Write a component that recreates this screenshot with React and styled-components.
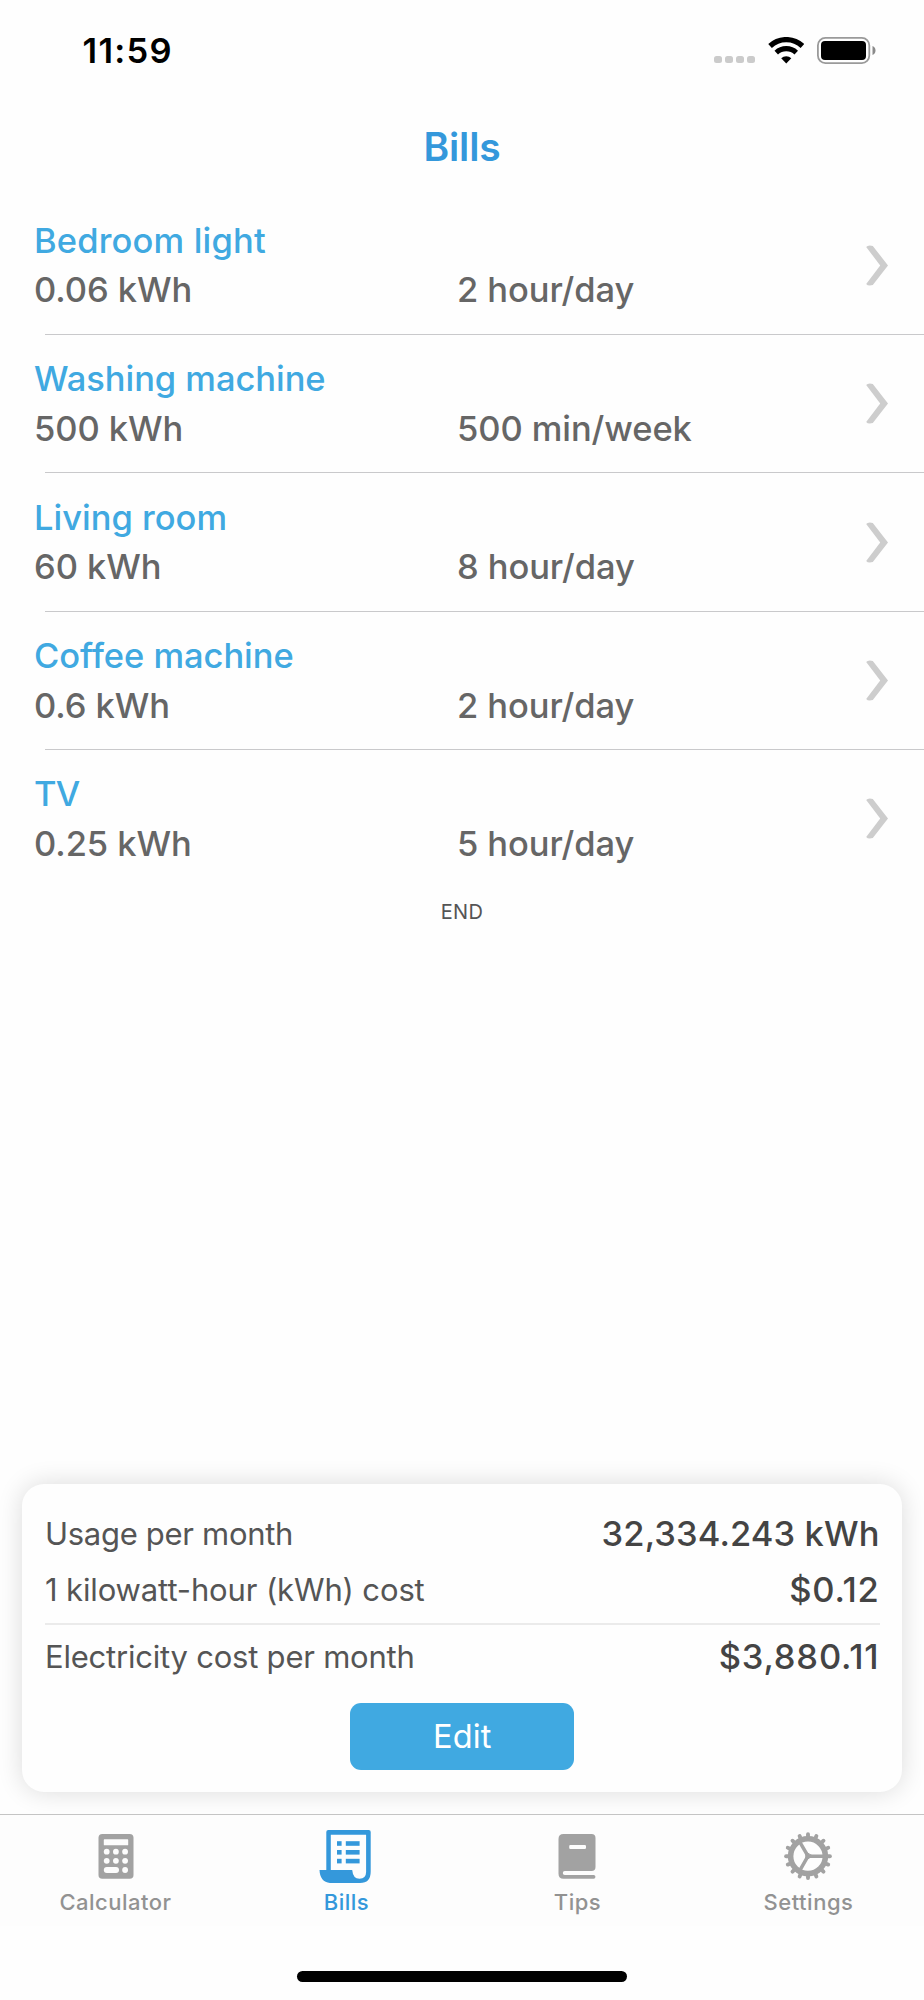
import styled, { createGlobalStyle } from "styled-components";

const GlobalStyle = createGlobalStyle`
  * {
    box-sizing: border-box;
  }
  body {
    margin: 0;
    background-color: #fefefe;
    font-family: Inter, "Liberation Sans", sans-serif;
  }
`;

const Container = styled.div`
  width: 924px;
  height: 2000px;
  display: flex;
  flex-direction: column;
  overflow: hidden;
`;

const StatusBar = styled.div`
  height: 98px;
  padding: 3px 48px 0 82.5px;
  display: flex;
  align-items: center;
  justify-content: space-between;
`;

const Time = styled.span`
  font-size: 34.5px;
  font-weight: 600;
  letter-spacing: 1.3px;
  color: #000;
`;

const StatusIcons = styled.div`
  display: flex;
  align-items: flex-end;
  height: 27px;
`;

const Signal = styled.div`
  display: flex;
  gap: 3.2px;
  margin: 0 12.2px 1px 0;
`;

const Dot = styled.span`
  width: 8px;
  height: 7.5px;
  border-radius: 2.5px;
  background-color: #cbcbcb;
`;

const Battery = styled.svg`
  margin-left: 13px;
`;

const Header = styled.header`
  height: 98.7px;
  padding-bottom: 2px;
  display: flex;
  align-items: center;
  justify-content: center;
`;

const Title = styled.h1`
  margin: 0;
  font-size: 39px;
  font-weight: 600;
  letter-spacing: -0.2px;
  color: #3498db;
`;

const List = styled.div`
  display: flex;
  flex-direction: column;
`;

const Row = styled.div`
  height: 137.4px;
  padding: 0 36px 0 34px;
  display: flex;
  align-items: center;
  justify-content: space-between;
`;

const Info = styled.div`
  display: grid;
  grid-template-columns: 423px auto;
  line-height: 49.6px;
  font-size: 34.5px;
  font-weight: 500;
`;

const Name = styled.span`
  grid-column: 1 / -1;
  color: #40a9e1;
  letter-spacing: ${(props) => props.$spacing}px;
`;

const Value = styled.span`
  color: #666;
  letter-spacing: -0.08px;
`;

const Divider = styled.div`
  height: 1px;
  margin-left: 45px;
  background-color: #c9c9cb;
`;

const End = styled.div`
  height: 48px;
  line-height: 48px;
  text-align: center;
  font-size: 20px;
  letter-spacing: 0.3px;
  color: #555;
`;

const Card = styled.section`
  height: 308px;
  margin: auto 22.5px 22px 22px;
  padding: 21px 22px 0 23px;
  border-radius: 22px;
  background-color: #fefefe;
  box-shadow: 0 0 26px rgba(0, 0, 0, 0.14);
  display: flex;
  flex-direction: column;
`;

const SummaryItem = styled.div`
  height: 56px;
  display: flex;
  align-items: center;
  justify-content: space-between;
`;

const SummaryLabel = styled.span`
  font-size: 31px;
  letter-spacing: ${(props) => props.$spacing}px;
  color: #555;
`;

const SummaryValue = styled.span`
  font-size: 34.5px;
  font-weight: 500;
  letter-spacing: ${(props) => props.$spacing}px;
  color: #444;
`;

const Hr = styled.hr`
  width: 100%;
  height: 2px;
  margin: 6px 0 3px;
  border: none;
  background-color: #ebebeb;
`;

const Button = styled.button`
  width: 224px;
  height: 67px;
  margin: 19px auto 0;
  padding: 0;
  border: none;
  border-radius: 11px;
  background-color: #40a9e1;
  color: #fff;
  font-family: inherit;
  font-size: 32.5px;
  letter-spacing: 0.1px;
`;

const TabBar = styled.nav`
  height: 112px;
  border-top: 1px solid #c4c4c4;
  background-color: #fdfdfd;
  display: grid;
  grid-template-columns: repeat(4, 1fr);
`;

const Tab = styled.a`
  padding-top: 13px;
  display: flex;
  flex-direction: column;
  align-items: center;
  font-size: 22px;
  font-weight: 500;
  line-height: 26px;
  color: ${(props) => (props.$active ? "#3498db" : "#929292")};
  svg {
    margin: 0 2px 5px 0;
    color: ${(props) => (props.$active ? "#3498db" : "#a2a2a2")};
  }
`;

const TabLabel = styled.span`
  letter-spacing: 0.5px;
`;

const HomeArea = styled.div`
  height: 74px;
  padding-top: 45px;
`;

const HomeIndicator = styled.div`
  width: 330px;
  height: 11px;
  margin: 0 auto;
  border-radius: 6px;
  background-color: #000;
`;

const WifiIcon = () => (
  <svg width="36.5" height="27" viewBox="0 0 36.5 27">
    <g fill="none" stroke="#000">
      <path d="M2.05 9A23.7 23.7 0 0 1 34.45 9" strokeWidth="5.3" />
      <path d="M8.25 15.55A14.7 14.7 0 0 1 28.25 15.55" strokeWidth="5.1" />
    </g>
    <path d="M18.25 26.6L13.2 21.2A7.4 7.4 0 0 1 23.3 21.2Z" />
  </svg>
);

const BatteryIcon = () => (
  <Battery width="59" height="27" viewBox="0 0 59 27">
    <rect
      x="0.9"
      y="0.9"
      width="51.4"
      height="25.2"
      rx="7.5"
      fill="none"
      stroke="#9a9a9a"
      strokeWidth="1.8"
    />
    <rect x="4" y="4" width="45" height="19" rx="4" />
    <path d="M55.5 9C59.5 10.5 59.5 16.5 55.5 18Z" fill="#8a8a8a" />
  </Battery>
);

const Chevron = () => (
  <svg width="22" height="41" viewBox="0 0 22 41">
    <path
      d="M0.2 2Q2 -0.4 6.8 0.9L22 20.5L6.8 40.1Q2 41.4 0.2 39L14.2 20.5Z"
      fill="#cdcdcd"
    />
  </svg>
);

const CalculatorIcon = () => (
  <svg width="56" height="56" viewBox="0 0 56 56">
    <rect x="11.5" y="6" width="35" height="44.7" rx="3.8" fill="currentColor" />
    <g fill="#fdfdfd">
      <rect x="16.8" y="11.3" width="24.4" height="6" rx="0.6" />
      {[23.7, 32.8].map((y) =>
        [19.7, 28.9, 38.1].map((x) => <circle key={x} cx={x} cy={y} r="2.9" />)
      )}
      <rect x="16.8" y="39" width="15.2" height="6" rx="3" />
      <circle cx="38.1" cy="42" r="2.9" />
    </g>
  </svg>
);

const BillsIcon = () => (
  <svg width="56" height="56" viewBox="0 0 56 56" fill="currentColor">
    <path
      fillRule="evenodd"
      d="M8.3 42V4Q8.3 2 10.3 2H50.7Q52.7 2 52.7 4V43.5Q52.7 55 42 55H12Q2 54 1.5 42ZM12.8 6.8V42H34.2Q35 50.8 41.5 50.8Q48.1 50.5 48.1 44V6.8Z"
    />
    {[13.2, 22, 30.8].map((y) => (
      <g key={y}>
        <rect x="19" y={y} width="4.6" height="4.6" />
        <rect x="27.8" y={y} width="13.8" height="4.6" />
      </g>
    ))}
  </svg>
);

const TipsIcon = () => (
  <svg width="56" height="56" viewBox="0 0 56 56">
    <path
      fill="currentColor"
      d="M14.5 6H42.5Q46.5 6 46.5 10V39Q46.5 43 42.5 43H15.8A2 2 0 0 0 15.8 47H44.6A1.8 1.8 0 0 1 44.6 50.7H14.5Q9.5 50.7 9.5 45.7V11Q9.5 6 14.5 6Z"
    />
    <rect x="20.2" y="16.9" width="16.8" height="4" rx="1.2" fill="#fdfdfd" />
  </svg>
);

const TEETH = Array.from({ length: 16 }, (_, i) => i * 22.5);
const SPOKES = [0, 120, 240];

const SettingsIcon = () => (
  <svg width="56" height="56" viewBox="0 0 56 56">
    <g
      transform="translate(28 28.2)"
      fill="none"
      stroke="currentColor"
      strokeLinecap="round"
    >
      <circle r="17.4" strokeWidth="5.6" />
      {TEETH.map((a) => (
        <path key={a} d="M19 0H21.9" strokeWidth="3.9" transform={`rotate(${a})`} />
      ))}
      {SPOKES.map((a) => (
        <path key={a} d="M0 0H16" strokeWidth="3.5" transform={`rotate(${a})`} />
      ))}
      <path
        d="M4.4 0L-2.2 3.8V-3.8Z"
        fill="currentColor"
        strokeWidth="1"
        strokeLinejoin="round"
      />
    </g>
  </svg>
);

const bills = [
  { name: "Bedroom light", power: "0.06 kWh", usage: "2 hour/day", spacing: 0.16 },
  { name: "Washing machine", power: "500 kWh", usage: "500 min/week", spacing: -0.05 },
  { name: "Living room", power: "60 kWh", usage: "8 hour/day", spacing: 0 },
  { name: "Coffee machine", power: "0.6 kWh", usage: "2 hour/day", spacing: -0.05 },
  { name: "TV", power: "0.25 kWh", usage: "5 hour/day", spacing: -0.8 },
];

const tabs = [
  { label: "Calculator", Icon: CalculatorIcon },
  { label: "Bills", Icon: BillsIcon, active: true },
  { label: "Tips", Icon: TipsIcon },
  { label: "Settings", Icon: SettingsIcon },
];

const App = () => {
  return (
    <Container>
      <GlobalStyle />
      <StatusBar>
        <Time>11:59</Time>
        <StatusIcons>
          <Signal>
            <Dot />
            <Dot />
            <Dot />
            <Dot />
          </Signal>
          <WifiIcon />
          <BatteryIcon />
        </StatusIcons>
      </StatusBar>
      <Header>
        <Title>Bills</Title>
      </Header>
      <List>
        {bills.map((bill, index) => (
          <div key={bill.name}>
            <Row>
              <Info>
                <Name $spacing={bill.spacing}>{bill.name}</Name>
                <Value>{bill.power}</Value>
                <Value>{bill.usage}</Value>
              </Info>
              <Chevron />
            </Row>
            {index < bills.length - 1 && <Divider />}
          </div>
        ))}
        <End>END</End>
      </List>
      <Card>
        <SummaryItem>
          <SummaryLabel $spacing={-0.3}>Usage per month</SummaryLabel>
          <SummaryValue $spacing={0.1}>32,334.243 kWh</SummaryValue>
        </SummaryItem>
        <SummaryItem>
          <SummaryLabel $spacing={-0.13}>1 kilowatt-hour (kWh) cost</SummaryLabel>
          <SummaryValue $spacing={0.7}>$0.12</SummaryValue>
        </SummaryItem>
        <Hr />
        <SummaryItem>
          <SummaryLabel $spacing={-0.22}>Electricity cost per month</SummaryLabel>
          <SummaryValue $spacing={0.8}>$3,880.11</SummaryValue>
        </SummaryItem>
        <Button>Edit</Button>
      </Card>
      <TabBar>
        {tabs.map(({ label, Icon, active }) => (
          <Tab key={label} $active={active}>
            <Icon />
            <TabLabel>{label}</TabLabel>
          </Tab>
        ))}
      </TabBar>
      <HomeArea>
        <HomeIndicator />
      </HomeArea>
    </Container>
  );
};

export default App;
